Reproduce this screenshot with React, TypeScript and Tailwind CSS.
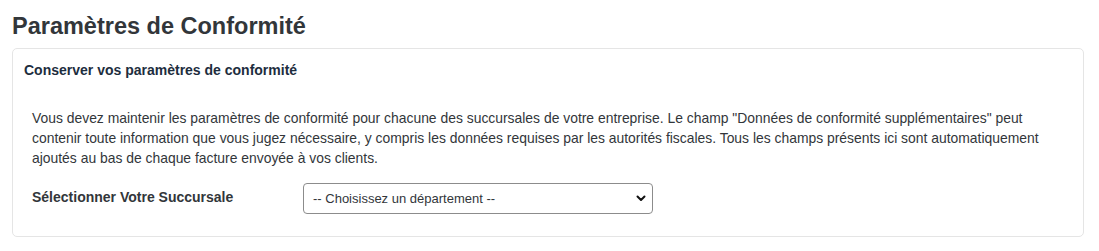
import { useState } from 'react';

const departments = ['Siège social', 'Succursale Nord', 'Succursale Sud'];

export default function App() {
  const [branch, setBranch] = useState('');

  return (
    <main className="h-[251px] w-[1099px] bg-white font-['Liberation_Sans',Arial,sans-serif] text-[#32363a]">
      <h1 className="pl-3 pt-[12px] text-[23.5px] font-bold leading-[28px]">Paramètres de Conformité</h1>

      <section className="ml-3 mt-[8px] w-[1072px] rounded-[5px] border border-[#e5e5e5] bg-white pb-[22px] pl-[11px] pr-[11px] pt-[13px]">
        <h2 className="text-[14px] font-bold leading-4 text-[#1d2d3e]">Conserver vos paramètres de conformité</h2>

        <div className="pl-2 pr-2 pt-[30px]">
          <p className="text-[13.9px] leading-5">
            Vous devez maintenir les paramètres de conformité pour chacune des succursales de votre entreprise. Le champ
            "Données de conformité supplémentaires" peut contenir toute information que vous jugez nécessaire, y compris
            les données requises par les autorités fiscales. Tous les champs présents ici sont automatiquement ajoutés au
            bas de chaque facture envoyée à vos clients.
          </p>

          <div className="mt-[15px] flex items-start">
            <label htmlFor="branch" className="w-[271px] pt-[6px] text-[14px] font-bold leading-4">
              Sélectionner Votre Succursale
            </label>
            <div className="relative w-[350px]">
              <select
                id="branch"
                value={branch}
                onChange={(e) => setBranch(e.target.value)}
                className="h-[31px] w-full appearance-none rounded-[4px] border border-[#8c8c8c] bg-white pl-[9px] pr-8 text-[13px] text-[#32363a] outline-none"
              >
                <option value="">-- Choisissez un département --</option>
                {departments.map((d) => (
                  <option key={d} value={d}>
                    {d}
                  </option>
                ))}
              </select>
              <svg
                className="pointer-events-none absolute right-[7px] top-[12px]"
                width="10"
                height="7"
                viewBox="0 0 10 7"
                fill="none"
              >
                <path d="M1.5 1.5 5 5l3.5-3.5" stroke="#111" strokeWidth="2" strokeLinecap="round" strokeLinejoin="round" />
              </svg>
            </div>
          </div>
        </div>
      </section>
    </main>
  );
}
